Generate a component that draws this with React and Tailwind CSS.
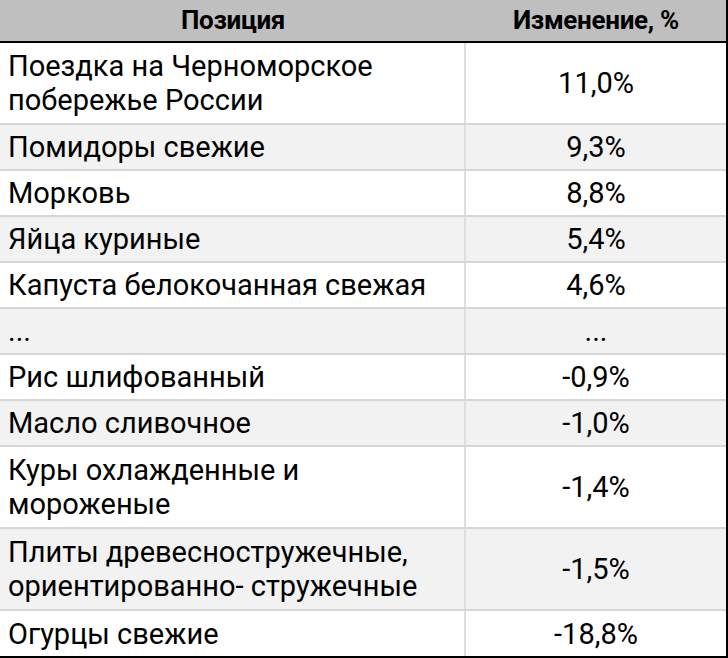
import React from "react";

const rows = [
  { name: ["Поездка на Черноморское", "побережье России"], value: "11,0%" },
  { name: ["Помидоры свежие"], value: "9,3%" },
  { name: ["Морковь"], value: "8,8%" },
  { name: ["Яйца куриные"], value: "5,4%" },
  { name: ["Капуста белокочанная свежая"], value: "4,6%" },
  { name: ["..."], value: "..." },
  { name: ["Рис шлифованный"], value: "-0,9%" },
  { name: ["Масло сливочное"], value: "-1,0%" },
  { name: ["Куры охлажденные и", "мороженые"], value: "-1,4%" },
  { name: ["Плиты древесностружечные,", "ориентированно- стружечные"], value: "-1,5%" },
  { name: ["Огурцы свежие"], value: "-18,8%" },
];

export default function App() {
  return (
    <div
      className="w-[728px] h-[658px] bg-white text-black overflow-hidden"
      style={{ fontFamily: "Roboto, 'Noto Sans', sans-serif" }}
    >
      <div className="w-[728px] border-r-2 border-b-2 border-black">
        <div className="grid grid-cols-[466px_1fr] h-[43px] bg-[#bfbfbf] border-b-2 border-black">
          <div className="flex items-center justify-center text-[26px] font-bold tracking-[-0.3px]">
            Позиция
          </div>
          <div className="flex items-center justify-center text-[26px] font-bold tracking-[-0.3px]">
            Изменение, %
          </div>
        </div>
        {rows.map((r, i) => {
          const last = i === rows.length - 1;
          const double = r.name.length > 1;
          const bg = i % 2 === 1 ? "bg-[#f2f2f2]" : "bg-white";
          const h = double ? "h-[82px]" : last ? "h-[45px]" : "h-[46px]";
          return (
            <div
              key={i}
              className={`grid grid-cols-[466px_1fr] ${h} ${bg} ${last ? "" : "border-b-2 border-[#d6d6d6]"}`}
            >
              <div className="flex flex-col justify-center pl-[8px] border-r-2 border-[#dedede] text-[29px] leading-[34px]">
                {r.name.map((t, j) => (
                  <div key={j}>{t}</div>
                ))}
              </div>
              <div className="flex items-center justify-center text-[29px] leading-[34px]">
                {r.value}
              </div>
            </div>
          );
        })}
      </div>
    </div>
  );
}
